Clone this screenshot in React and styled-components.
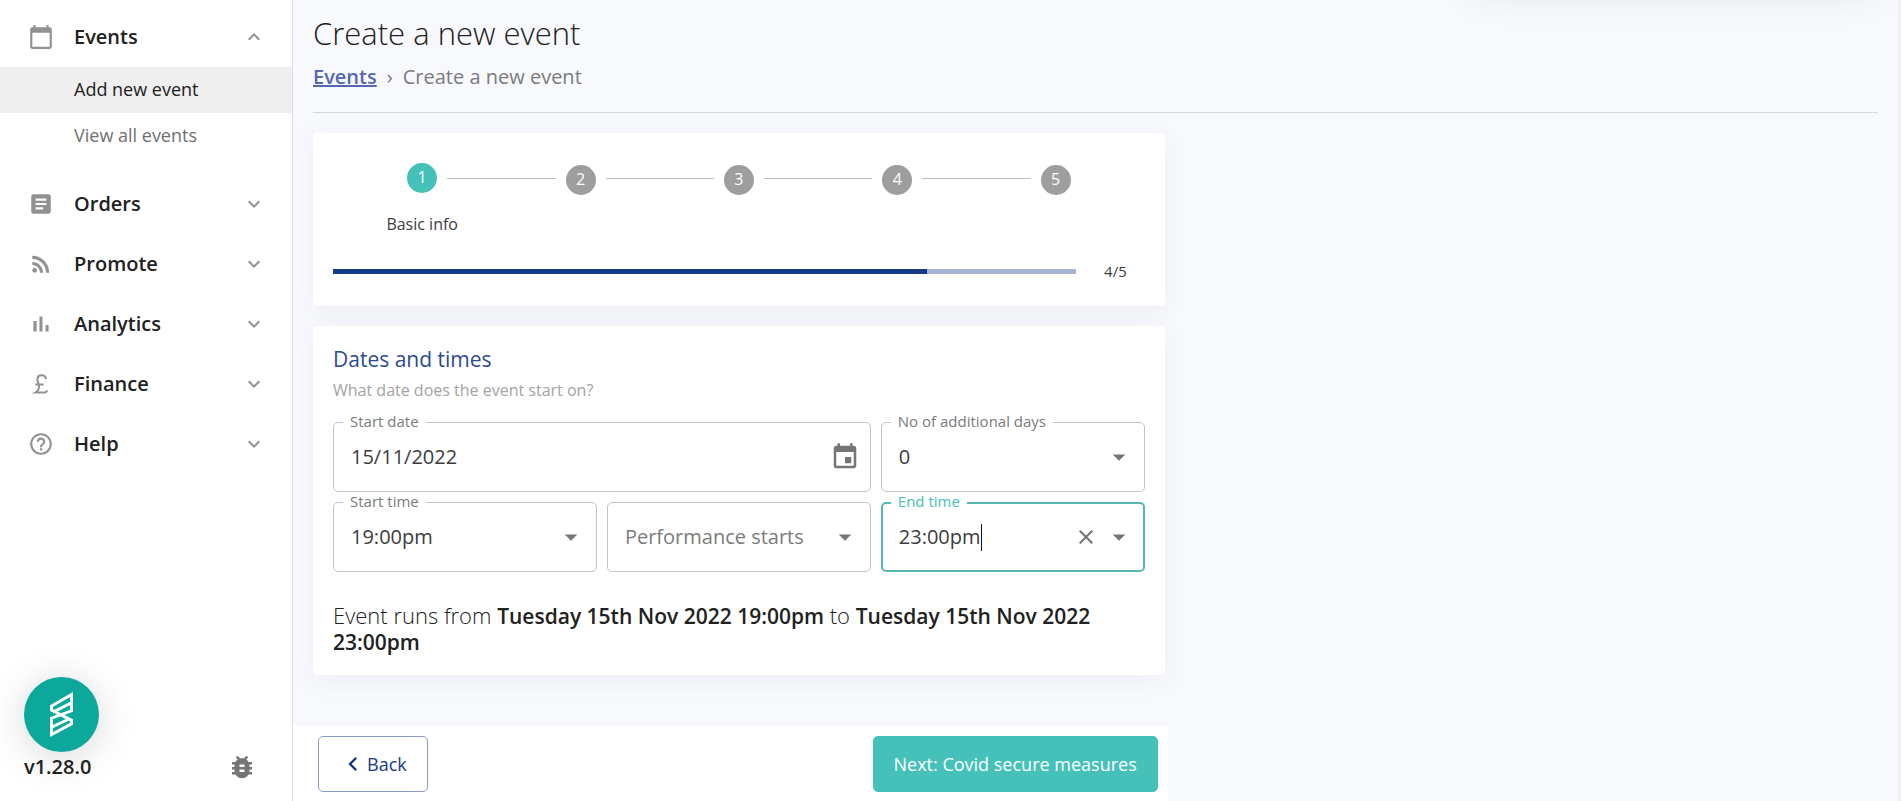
import React, { useState } from "react";
import styled, { createGlobalStyle, css } from "styled-components";
import {
  MdCalendarToday,
  MdArticle,
  MdRssFeed,
  MdHelpOutline,
  MdExpandMore,
  MdExpandLess,
  MdBugReport,
  MdEvent,
  MdArrowDropDown,
  MdClose,
  MdChevronLeft,
} from "react-icons/md";

const teal = "#45c1ba";
const navy = "#173a86";
const ink = "#212121";

const GlobalStyle = createGlobalStyle`
  *, *::before, *::after { box-sizing: border-box; }
  body {
    margin: 0;
    background: #f8f9fd;
    color: ${ink};
    font-family: "Open Sans", "Noto Sans", sans-serif;
    font-size: 20px;
    font-weight: 400;
  }
  button, input, select { font: inherit; color: inherit; }
`;

const Page = styled.div`
  display: flex;
  min-height: 100vh;
  border-right: 3px solid #f1f1f3;
  position: relative;
  overflow: clip;
`;

const TopShade = styled.div`
  position: absolute;
  top: -60px;
  right: 24px;
  width: 400px;
  height: 50px;
  box-shadow: 0 0 40px rgba(0, 0, 0, 0.1);
`;

/* Sidebar */
const Sidebar = styled.aside`
  flex: 0 0 293px;
  height: 100vh;
  position: sticky;
  top: 0;
  display: flex;
  flex-direction: column;
  background: #fff;
  border-right: 1px solid #dcdde0;
`;

const Nav = styled.nav`
  flex: 1;
  padding-top: 7px;
`;

const NavButton = styled.button`
  display: flex;
  align-items: center;
  width: 100%;
  height: 60px;
  padding: 0 26px 0 28px;
  border: 0;
  background: none;
  text-align: left;
  font-size: 20px;
  font-weight: 600;
  cursor: pointer;
  svg { color: #919191; }
  span { flex: 1; padding: 0 0 2px 20px; }
`;

const SubList = styled.ul`
  list-style: none;
  margin: 0 0 15px;
  padding: 0;
`;

const SubLink = styled.a`
  display: flex;
  align-items: center;
  height: 46px;
  padding: 0 0 2px 74px;
  font-size: 18px;
  text-decoration: none;
  color: ${(p) => (p.$active ? ink : "#707070")};
  background: ${(p) => (p.$active ? "#efefef" : "none")};
`;

const SidebarFooter = styled.footer`
  display: flex;
  flex-direction: column;
  padding: 0 35px 17px 24px;
`;

const HelpBubble = styled.button`
  display: grid;
  place-items: center;
  width: 75px;
  height: 75px;
  padding: 0;
  border: 0;
  border-radius: 50%;
  background: #0ba89b;
  box-shadow: 0 5px 40px rgba(0, 0, 0, 0.16);
  cursor: pointer;
`;

const VersionRow = styled.div`
  display: flex;
  align-items: center;
  justify-content: space-between;
  height: 32px;
  padding-bottom: 2px;
  font-size: 20px;
  line-height: 28px;
  font-weight: 600;
`;

const IconButton = styled.button`
  display: grid;
  place-items: center;
  padding: 0;
  border: 0;
  background: none;
  color: #757575;
  cursor: pointer;
`;

/* Main area */
const Main = styled.main`
  flex: 1;
  min-width: 0;
  display: flex;
  flex-direction: column;
`;

const PageHeader = styled.header`
  margin: 0 20px 20px;
  padding: 12px 0 22px;
  border-bottom: 1px solid #d8d9de;
`;

const Title = styled.h1`
  margin: 0 0 10px;
  font-size: 31px;
  line-height: 42px;
  font-weight: 300;
`;

const Crumbs = styled.nav`
  display: flex;
  gap: 10px;
  font-size: 20px;
  line-height: 26px;
  color: #7b7b7d;
`;

const CrumbLink = styled.a`
  color: #5567b3;
  font-weight: 600;
`;

const Column = styled.div`
  width: 54.5%;
  flex: 1;
  display: flex;
  flex-direction: column;
`;

const Cards = styled.div`
  flex: 1;
  display: flex;
  flex-direction: column;
  gap: 20px;
  padding: 0 3px 20px 20px;
`;

const Card = styled.section`
  padding: 20px;
  background: #fff;
  border-radius: 4px;
  box-shadow: 0 5px 24px rgba(60, 70, 110, 0.06);
`;

/* Stepper */
const Steps = styled.ol`
  display: grid;
  grid-template-columns: repeat(5, 1fr);
  list-style: none;
  margin: 0;
  padding: 10px;
`;

const Step = styled.li`
  display: flex;
  flex-direction: column;
  align-items: center;
`;

const StepTrack = styled.div`
  display: flex;
  justify-content: space-between;
  gap: 10px;
  width: 100%;
  height: 32px;
`;

const StepLine = styled.span`
  flex: 1;
  height: 1px;
  margin-top: 15px;
  background: ${(p) => (p.$hidden ? "transparent" : "#bdbdbd")};
`;

const StepDot = styled.span`
  display: grid;
  place-items: center;
  align-self: ${(p) => (p.$active ? "flex-start" : "flex-end")};
  width: 30px;
  height: 30px;
  padding-bottom: 2px;
  border-radius: 50%;
  background: ${(p) => (p.$active ? teal : "#9e9e9e")};
  color: #fff;
  font-size: 16px;
  line-height: 20px;
  font-weight: 500;
`;

const StepLabel = styled.span`
  margin-top: 18px;
  font-size: 16px;
  line-height: 22px;
  color: #3c3c3c;
`;

const ProgressRow = styled.div`
  display: flex;
  align-items: center;
  gap: 28px;
  margin-top: 15px;
  padding: 0 18px 4px 0;
  font-size: 15px;
  line-height: 22px;
  color: #3c3c3c;
`;

const ProgressBar = styled.div`
  flex: 1;
  height: 5px;
  background: #a7b3d3;
`;

const ProgressFill = styled.div`
  height: 100%;
  background: ${navy};
`;

/* Form */
const CardTitle = styled.h2`
  margin: 0;
  font-size: 21px;
  line-height: 27px;
  font-weight: 400;
  color: #2c4b91;
`;

const Hint = styled.p`
  margin: 5px 0 20px;
  font-size: 16px;
  line-height: 24px;
  color: #a3a3a3;
`;

const FieldGrid = styled.div`
  display: grid;
  grid-template-columns: repeat(3, 1fr);
  gap: 10px;
`;

const FieldBox = styled.div`
  position: relative;
  grid-column: span ${(p) => p.$span || 1};
  display: flex;
  align-items: center;
  height: 70px;
  padding: 0 10px 0 17px;
  border-radius: 5px;
  border: 1px solid #c4c4c4;
  ${(p) => p.$focused && css`
    padding: 0 9px 0 16px;
    border: 2px solid #56b8b1;
  `}
`;

const FieldLabel = styled.label`
  position: absolute;
  left: ${(p) => (p.$focused ? "8px" : "9px")};
  top: ${(p) => (p.$focused ? "-11px" : "-10px")};
  padding: 0 7px;
  background: #fff;
  font-size: 15px;
  line-height: 16px;
  color: ${(p) => (p.$focused ? teal : "#7b7b7b")};
`;

const controlText = css`
  min-width: 0;
  padding: 0;
  border: 0;
  outline: 0;
  background: none;
  font-size: 20px;
  line-height: 28px;
  color: ${(p) => (p.$placeholder ? "#7b7b7b" : "#3c3c3c")};
`;

const TextInput = styled.input`
  ${controlText}
  flex: 1;
`;

const ComboInput = styled.input`
  ${controlText}
  field-sizing: content;
  caret-color: transparent;
`;

const Caret = styled.span`
  width: 1px;
  height: 27px;
  margin-right: auto;
  background: #111;
`;

const ClearIcon = styled(MdClose)`
  margin-right: 6px;
`;

const Select = styled.select`
  ${controlText}
  flex: 1;
  appearance: none;
  align-self: stretch;
  margin-right: -30px;
  padding-right: 30px;
`;

const SelectArrow = styled(MdArrowDropDown)`
  flex: none;
  color: #757575;
  pointer-events: none;
`;

const Summary = styled.p`
  margin: 31px 0 0;
  font-size: 22px;
  line-height: 25px;
  font-weight: 300;
  strong { font-size: 21px; font-weight: 600; }
`;

/* Bottom bar */
const Actions = styled.div`
  position: sticky;
  bottom: 0;
  display: flex;
  justify-content: space-between;
  padding: 10px 10px 9px 25px;
  background: #fff;
`;

const Button = styled.button`
  display: flex;
  align-items: center;
  justify-content: center;
  height: 56px;
  padding: 0 20px;
  border-radius: 5px;
  border: 1px solid ${(p) => (p.$primary ? teal : "#8b9cc3")};
  background: ${(p) => (p.$primary ? teal : "#fff")};
  color: ${(p) => (p.$primary ? "#fff" : navy)};
  font-size: 18px;
  font-weight: 500;
  cursor: pointer;
`;

const BarChartIcon = () => (
  <svg width="26" height="26" viewBox="0 0 24 24" fill="currentColor" aria-hidden="true">
    <path d="M5 9.2h3V19H5zM10.6 5h2.8v14h-2.8zm5.6 8H19v6h-2.8z" />
  </svg>
);

const PoundIcon = () => (
  <svg width="26" height="26" viewBox="0 0 26 26" fill="none" stroke="currentColor" strokeWidth="2" aria-hidden="true">
    <path d="M18 8.2C17.8 5.6 16.200 4.300 13.800 4.300C11.200 4.300 9.400 6 9.400 8.300C9.400 10.600 11 12.200 11 15.200C11 18.200 9.500 20.300 7.400 21.500H16.500C18 21.500 18.800 20.800 18.900 19.200M7.200 13.600H15.600" />
  </svg>
);

const Logo = () => (
  <svg width="75" height="75" viewBox="0 0 75 75" fill="none" stroke="#fff" strokeWidth="2.900" aria-hidden="true">
    <path d="M47.500 17.500L27.500 29V33L47.500 43.200V46.800L27.500 57.500V41.200L47.500 33.800ZM30 34.600L47.500 25.800M45 42L27.500 50.300" />
  </svg>
);

const sections = [
  { name: "Orders", icon: <MdArticle size={26} /> },
  { name: "Promote", icon: <MdRssFeed size={26} /> },
  { name: "Analytics", icon: <BarChartIcon /> },
  { name: "Finance", icon: <PoundIcon /> },
  { name: "Help", icon: <MdHelpOutline size={26} /> },
];

const steps = ["Basic info", "", "", "", ""];

export default function App() {
  const [date, setDate] = useState("15/11/2022");
  const [end, setEnd] = useState("23:00pm");
  const [starts, setStarts] = useState("");

  return (
    <>
      <GlobalStyle />
      <Page>
        <TopShade />
        <Sidebar>
          <Nav aria-label="Main">
            <NavButton type="button" aria-expanded="true">
              <MdCalendarToday size={26} />
              <span>Events</span>
              <MdExpandLess size={24} />
            </NavButton>
            <SubList>
              <li><SubLink href="#add" $active>Add new event</SubLink></li>
              <li><SubLink href="#all">View all events</SubLink></li>
            </SubList>
            {sections.map((s) => (
              <NavButton key={s.name} type="button" aria-expanded="false">
                {s.icon}
                <span>{s.name}</span>
                <MdExpandMore size={24} />
              </NavButton>
            ))}
          </Nav>
          <SidebarFooter>
            <HelpBubble type="button" aria-label="Support"><Logo /></HelpBubble>
            <VersionRow>
              v1.28.0
              <IconButton type="button" aria-label="Report a bug"><MdBugReport size={30} /></IconButton>
            </VersionRow>
          </SidebarFooter>
        </Sidebar>

        <Main>
          <PageHeader>
            <Title>Create a new event</Title>
            <Crumbs aria-label="Breadcrumb">
              <CrumbLink href="#events">Events</CrumbLink>
              <span>›</span>
              <span>Create a new event</span>
            </Crumbs>
          </PageHeader>

          <Column>
            <Cards>
              <Card>
                <Steps>
                  {steps.map((label, i) => (
                    <Step key={i}>
                      <StepTrack>
                        <StepLine $hidden={i === 0} />
                        <StepDot $active={i === 0}>{i + 1}</StepDot>
                        <StepLine $hidden={i === steps.length - 1} />
                      </StepTrack>
                      {label && <StepLabel>{label}</StepLabel>}
                    </Step>
                  ))}
                </Steps>
                <ProgressRow>
                  <ProgressBar role="progressbar" aria-label="Progress" aria-valuenow={4} aria-valuemax={5}>
                    <ProgressFill style={{ width: `${(4 / 5) * 100}%` }} />
                  </ProgressBar>
                  <span>4/5</span>
                </ProgressRow>
              </Card>

              <Card>
                <CardTitle>Dates and times</CardTitle>
                <Hint>What date does the event start on?</Hint>
                <FieldGrid>
                  <FieldBox $span={2}>
                    <FieldLabel htmlFor="start-date">Start date</FieldLabel>
                    <TextInput id="start-date" value={date} onChange={(e) => setDate(e.target.value)} />
                    <IconButton type="button" aria-label="Choose date"><MdEvent size={30} /></IconButton>
                  </FieldBox>
                  <FieldBox>
                    <FieldLabel htmlFor="days">No of additional days</FieldLabel>
                    <Select id="days" defaultValue="0">
                      <option>0</option>
                      <option>1</option>
                      <option>2</option>
                    </Select>
                    <SelectArrow size={30} />
                  </FieldBox>
                  <FieldBox>
                    <FieldLabel htmlFor="start-time">Start time</FieldLabel>
                    <Select id="start-time" defaultValue="19:00pm">
                      <option>18:00pm</option>
                      <option>19:00pm</option>
                      <option>20:00pm</option>
                    </Select>
                    <SelectArrow size={30} />
                  </FieldBox>
                  <FieldBox>
                    <Select
                      aria-label="Performance starts"
                      value={starts}
                      onChange={(e) => setStarts(e.target.value)}
                      $placeholder={!starts}
                    >
                      <option value="">Performance starts</option>
                      <option>19:30pm</option>
                      <option>20:00pm</option>
                    </Select>
                    <SelectArrow size={30} />
                  </FieldBox>
                  <FieldBox $focused>
                    <FieldLabel htmlFor="end-time" $focused>End time</FieldLabel>
                    <ComboInput id="end-time" value={end} onChange={(e) => setEnd(e.target.value)} />
                    <Caret />
                    <IconButton type="button" aria-label="Clear" onClick={() => setEnd("")}><ClearIcon size={24} /></IconButton>
                    <IconButton type="button" aria-label="Open"><MdArrowDropDown size={30} /></IconButton>
                  </FieldBox>
                </FieldGrid>
                <Summary>
                  Event runs from <strong>Tuesday 15th Nov 2022 19:00pm</strong> to{" "}
                  <strong>Tuesday 15th Nov 2022 23:00pm</strong>
                </Summary>
              </Card>
            </Cards>

            <Actions>
              <Button type="button"><MdChevronLeft size={28} />Back</Button>
              <Button type="button" $primary>Next: Covid secure measures</Button>
            </Actions>
          </Column>
        </Main>
      </Page>
    </>
  );
}
